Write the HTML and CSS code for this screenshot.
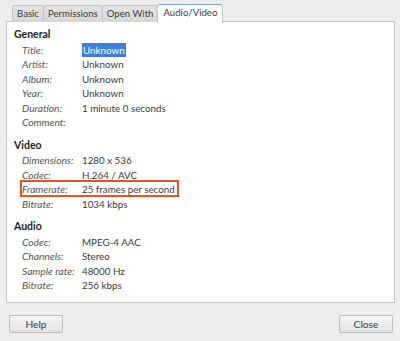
FILE: index.html
```html
<!DOCTYPE html>
<html lang="en">
<head>
  <meta charset="UTF-8">
  <title>Properties</title>
  <link rel="stylesheet" href="styles.css">
</head>
<body>
  <div class="dialog">
    <div class="tabs">
      <div class="tab">Basic</div>
      <div class="tab">Permissions</div>
      <div class="tab">Open With</div>
      <div class="tab active">Audio/Video</div>
    </div>

    <div class="panel">
      <h3>General</h3>
      <div class="row"><span class="label">Title:</span><span class="value"><span class="selected">Unknown</span></span></div>
      <div class="row"><span class="label">Artist:</span><span class="value">Unknown</span></div>
      <div class="row"><span class="label">Album:</span><span class="value">Unknown</span></div>
      <div class="row"><span class="label">Year:</span><span class="value">Unknown</span></div>
      <div class="row"><span class="label">Duration:</span><span class="value">1 minute 0 seconds</span></div>
      <div class="row"><span class="label">Comment:</span><span class="value"></span></div>

      <h3>Video</h3>
      <div class="row"><span class="label">Dimensions:</span><span class="value">1280 x 536</span></div>
      <div class="row"><span class="label">Codec:</span><span class="value">H.264 / AVC</span></div>
      <div class="row marked"><span class="label">Framerate:</span><span class="value">25 frames per second</span></div>
      <div class="row"><span class="label">Bitrate:</span><span class="value">1034 kbps</span></div>

      <h3>Audio</h3>
      <div class="row"><span class="label">Codec:</span><span class="value">MPEG-4 AAC</span></div>
      <div class="row"><span class="label">Channels:</span><span class="value">Stereo</span></div>
      <div class="row"><span class="label">Sample rate:</span><span class="value">48000 Hz</span></div>
      <div class="row"><span class="label">Bitrate:</span><span class="value">256 kbps</span></div>
    </div>

    <div class="buttons">
      <button>Help</button>
      <button>Close</button>
    </div>
  </div>
</body>
</html>
```

FILE: styles.css
```css
body {
  margin: 0;
  background: #ededed;
  font-family: Lato, "Open Sans", sans-serif;
  font-size: 10.5px;
  color: #3c3c3c;
}
.dialog {
  width: 400px;
  height: 341px;
  padding: 4px 5px 0 6px;
  box-sizing: border-box;
}
.tabs {
  display: flex;
  padding-left: 6px;
  height: 17px;
  position: relative;
  z-index: 1;
  font-size: 9.6px;
}
.tab {
  height: 16px;
  line-height: 16px;
  padding: 0 4px;
  margin-top: 1px;
  border: 1px solid #c4c4c4;
  border-bottom: none;
  background: linear-gradient(#e4e4e4, #d6d6d6);
  border-radius: 3px 3px 0 0;
  margin-right: -1px;
}
.tab.active {
  background: #fff;
  margin-top: 0;
  height: 18px;
  padding: 0 5px;
  border-top: 1px solid #7da2ce;
}
.panel {
  height: 282px;
  background: #fff;
  border: 1px solid #c4c4c4;
  box-sizing: border-box;
  padding: 4px 7px 0 7px;
}
h3 {
  font-size: 10.5px;
  font-weight: bold;
  color: #1e1e1e;
  margin: 0;
  height: 16px;
  line-height: 16px;
}
h3 + .row {
  margin-top: 0.5px;
}
.row + h3 {
  margin-top: 7px;
}
.row {
  display: flex;
  height: 14.5px;
  line-height: 14.5px;
  padding-left: 8px;
}
.label {
  width: 60px;
  flex-shrink: 0;
  font-style: italic;
  font-size: 10.2px;
  color: #555;
}
.value {
  white-space: nowrap;
  font-size: 9.8px;
}
.selected {
  background: #3d7fd9;
  color: #fff;
  padding: 1px 1px;
}
.marked {
  position: relative;
}
.marked::after {
  content: "";
  position: absolute;
  left: 6px;
  top: -2px;
  width: 159px;
  height: 17px;
  border: 2px solid #e8531f;
  box-sizing: border-box;
}
.buttons {
  display: flex;
  justify-content: space-between;
  padding: 12px 2px 0 3px;
}
button {
  width: 54px;
  height: 18px;
  font-family: inherit;
  font-size: 10.2px;
  color: #3c3c3c;
  border: 1px solid #bcbcbc;
  border-radius: 2px;
  background: linear-gradient(#f6f6f6, #e2e2e2);
  padding: 0;
}
```
